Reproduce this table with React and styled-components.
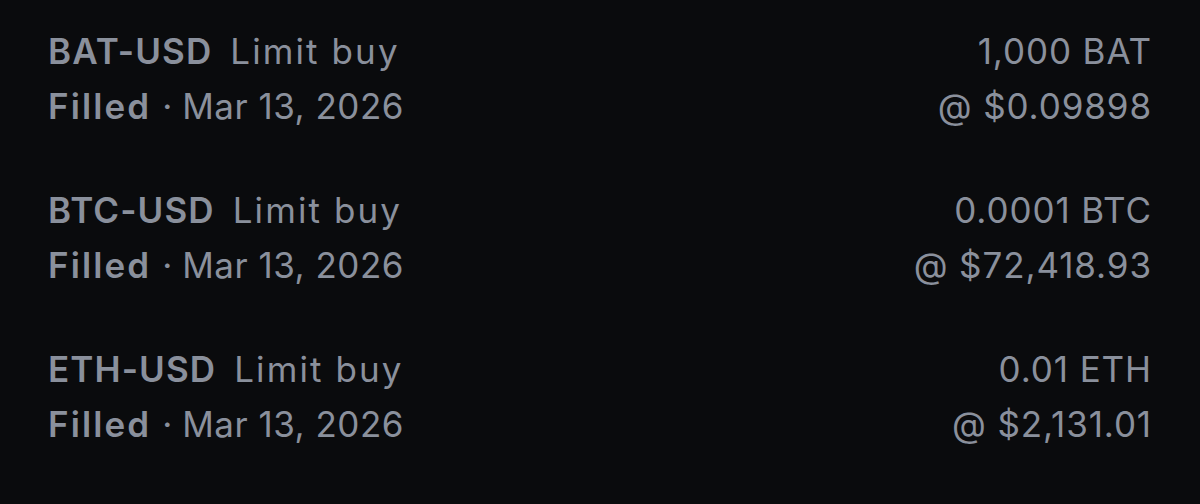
import React from "react";
import styled, { createGlobalStyle } from "styled-components";

const GlobalStyle = createGlobalStyle`
  html, body {
    margin: 0;
    padding: 0;
    background: #0a0b0d;
  }
  body {
    font-family: "Inter", "Noto Sans", sans-serif;
    -webkit-font-smoothing: antialiased;
  }
`;

const Page = styled.main`
  width: 1200px;
  height: 504px;
  box-sizing: border-box;
  padding: 24px 48px 0 48px;
  background: #0a0b0d;
  display: flex;
  flex-direction: column;
  gap: 49px;
`;

const Order = styled.section`
  display: flex;
  justify-content: space-between;
  align-items: flex-start;
`;

const Column = styled.div`
  display: flex;
  flex-direction: column;
  align-items: ${(p) => (p.$right ? "flex-end" : "flex-start")};
`;

const Line = styled.div`
  display: flex;
  align-items: baseline;
  font-size: 35px;
  line-height: 55px;
  height: 55px;
  color: #8a909c;
  letter-spacing: 0.9px;
  white-space: nowrap;
`;

const Pair = styled.span`
  font-weight: 600;
  letter-spacing: 1.1px;
  margin-right: 18px;
`;

const Kind = styled.span`
  letter-spacing: 2.1px;
`;

const Status = styled.span`
  font-weight: 600;
  letter-spacing: 2.1px;
`;

const Dot = styled.span`
  margin: 0 9px 0 11px;
`;

const DateText = styled.span`
  letter-spacing: 0.5px;
`;

const orders = [
  { pair: "BAT-USD", amount: "1,000 BAT", price: "@ $0.09898" },
  { pair: "BTC-USD", amount: "0.0001 BTC", price: "@ $72,418.93" },
  { pair: "ETH-USD", amount: "0.01 ETH", price: "@ $2,131.01" },
];

export default function App() {
  return (
    <>
      <GlobalStyle />
      <Page>
        {orders.map((o) => (
          <Order key={o.pair}>
            <Column>
              <Line>
                <Pair>{o.pair}</Pair>
                <Kind>Limit buy</Kind>
              </Line>
              <Line>
                <Status>Filled</Status>
                <Dot>·</Dot>
                <DateText>Mar 13, 2026</DateText>
              </Line>
            </Column>
            <Column $right>
              <Line>{o.amount}</Line>
              <Line>{o.price}</Line>
            </Column>
          </Order>
        ))}
      </Page>
    </>
  );
}
